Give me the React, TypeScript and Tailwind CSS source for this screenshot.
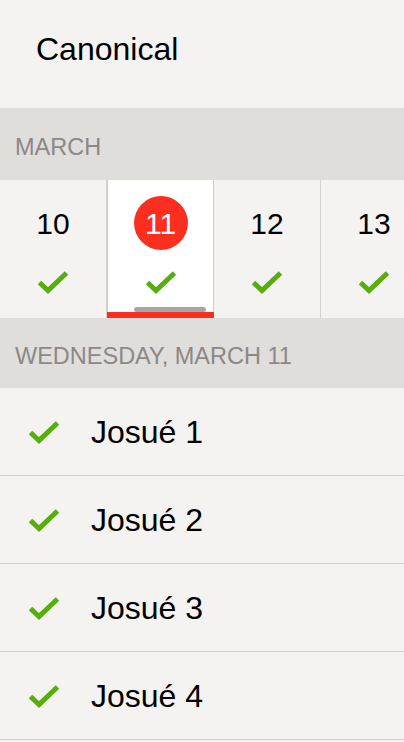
const days = [
  { n: "10", selected: false },
  { n: "11", selected: true },
  { n: "12", selected: false },
  { n: "13", selected: false },
];

const items = ["Josué 1", "Josué 2", "Josué 3", "Josué 4"];

function Check({ className }: { className?: string }) {
  return (
    <svg viewBox="0 0 32 24" className={className} fill="none">
      <polyline points="2.5,12.5 11,20.5 29.5,3" stroke="#56ad0b" strokeWidth="5" />
    </svg>
  );
}

function App() {
  return (
    <div className="h-[742px] w-[404px] overflow-hidden bg-[#f4f3f1] font-['Liberation_Sans',Arial,sans-serif] text-black">
      <div className="flex h-[108px] items-center pl-[36px] pb-[10px] text-[32px]">Canonical</div>

      <div className="flex h-[72px] items-center bg-[#e0dedb] pl-[15px] pt-[8px] text-[23.5px] text-[#8b8886]">MARCH</div>

      <div className="flex h-[138px]">
        {days.map((d) => (
          <div
            key={d.n}
            className={
              d.selected
                ? "relative flex w-[107px] shrink-0 flex-col items-center border-x border-[#cfcdcb] bg-white"
                : "relative flex w-[107px] shrink-0 flex-col items-center border-r border-[#d4d2cf]"
            }
          >
            <div className="mt-[16px] flex h-[54px] w-[54px] items-center justify-center">
              {d.selected ? (
                <div className="flex h-[54px] w-[54px] items-center justify-center rounded-full bg-[#fc2e20] text-[30px] text-white">
                  {d.n}
                </div>
              ) : (
                <span className="text-[30px]">{d.n}</span>
              )}
            </div>
            <Check className="mt-[20px] h-[24px] w-[32px]" />
            {d.selected && (
              <>
                <div className="absolute bottom-[6px] left-[26px] h-[5px] w-[72px] rounded-full bg-[#a9a7a6]" />
                <div className="absolute -left-px -right-px bottom-0 h-[6px] bg-[#fc2e20]" />
              </>
            )}
          </div>
        ))}
      </div>

      <div className="flex h-[70px] items-center bg-[#e0dedb] pl-[15px] pt-[8px] text-[23.5px] text-[#8b8886]">
        WEDNESDAY, MARCH 11
      </div>

      {items.map((t) => (
        <div key={t} className="flex h-[88px] items-center border-b border-[#d1cfcd]">
          <Check className="ml-[28px] h-[24px] w-[32px]" />
          <span className="ml-[31px] text-[32px]">{t}</span>
        </div>
      ))}
    </div>
  );
}

export default App;
